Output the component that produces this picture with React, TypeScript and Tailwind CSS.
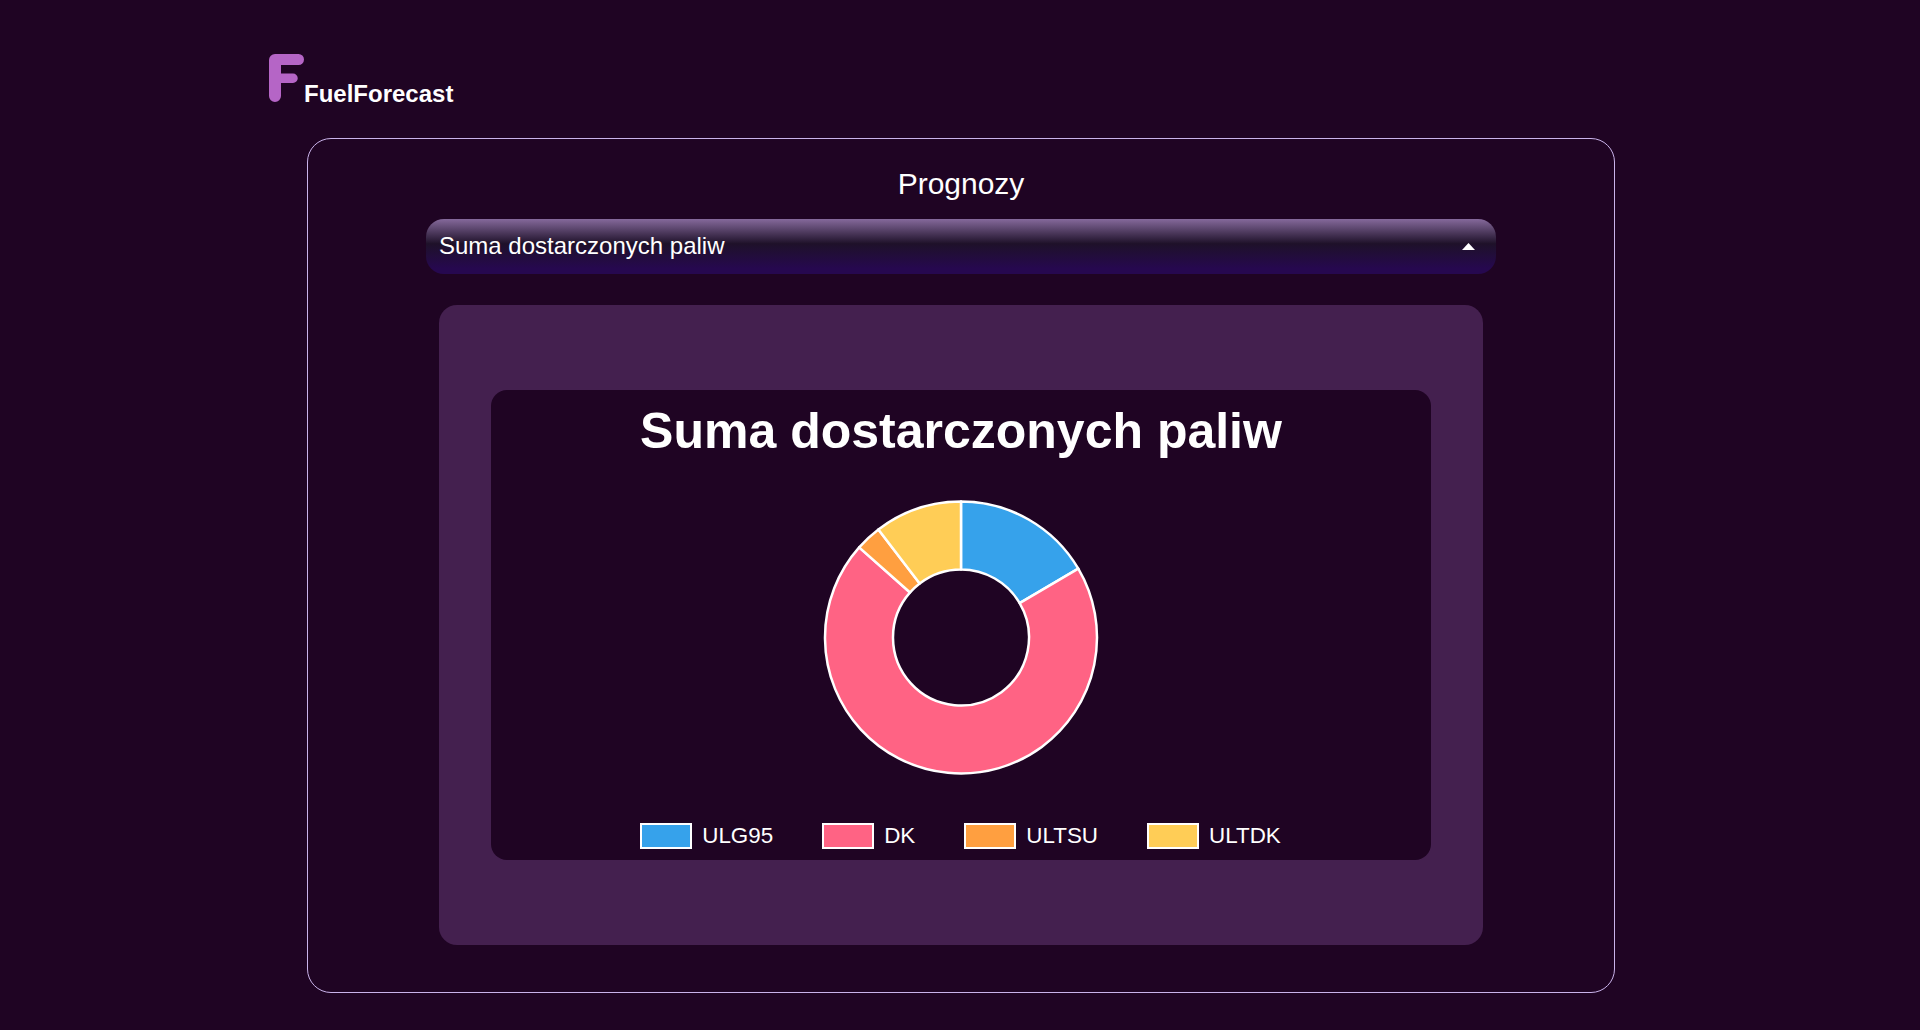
import React from "react";

const cx = 140, cy = 140.5, R = 136, r = 68;
function pt(rad: number, deg: number) {
  const a = (deg * Math.PI) / 180;
  return `${(cx + rad * Math.sin(a)).toFixed(2)} ${(cy - rad * Math.cos(a)).toFixed(2)}`;
}
function slice(a0: number, a1: number) {
  const large = a1 - a0 > 180 ? 1 : 0;
  return `M${pt(R, a0)}A${R} ${R} 0 ${large} 1 ${pt(R, a1)}L${pt(r, a1)}A${r} ${r} 0 ${large} 0 ${pt(r, a0)}Z`;
}
const slices = [
  { c: "#36a2eb", a: 0, b: 59.6 },
  { c: "#ff6384", a: 59.6, b: 311.5 },
  { c: "#ff9f40", a: 311.5, b: 322.6 },
  { c: "#ffcd56", a: 322.6, b: 360 },
];
const legend = [
  { label: "ULG95", box: "bg-[#36a2eb]" },
  { label: "DK", box: "bg-[#ff6384]" },
  { label: "ULTSU", box: "bg-[#ff9f40]" },
  { label: "ULTDK", box: "bg-[#ffcd56]" },
];

export default function App() {
  return (
    <div className="h-[1030px] overflow-hidden bg-[#1f0423] text-white font-['Liberation_Sans',Arial,sans-serif]">
      <header className="flex h-[138px] items-start pl-[269px] pt-[54px]">
        <svg width="35" height="48" viewBox="0 0 35 48" className="shrink-0">
          <path
            d="M6 0H29.5a5.5 5.5 0 0 1 0 11H12V19.5H24a4.5 4.5 0 0 1 0 9.5H12V42a6 6 0 0 1-12 0V6a6 6 0 0 1 6-6Z"
            fill="#b565c6"
          />
        </svg>
        <span className="mt-[26px] text-[24px] font-bold leading-[27px]">FuelForecast</span>
      </header>
      <main className="ml-[307px] flex h-[855px] w-[1308px] flex-col items-center rounded-[24px] border border-[#c9b3ea]">
        <h1 className="mt-[27px] text-[30px] font-normal leading-[36px]">Prognozy</h1>
        <button className="mt-[17px] flex h-[55px] w-[1070px] items-center justify-between rounded-[18px] bg-[linear-gradient(180deg,#85699b_0%,#1e1129_45%,#26084f_90%)] pl-[13px] pr-[21px] text-[24px] leading-[28px] text-white">
          <span className="mb-[2px]">Suma dostarczonych paliw</span>
          <svg width="13" height="7" viewBox="0 0 13 7"><path d="M0 7L6.5 0L13 7Z" fill="#fff" /></svg>
        </button>
        <section className="mt-[31px] flex h-[640px] w-[1044px] items-center justify-center rounded-[18px] bg-[#44204f]">
          <div className="flex h-[470px] w-[940px] flex-col items-center rounded-[16px] bg-[#1f0423]">
            <h2 className="mt-[11px] text-[50px] font-bold leading-[60px]">Suma dostarczonych paliw</h2>
            <svg width="280" height="280" viewBox="0 0 280 280" className="mt-[36px]">
              {slices.map((s) => (
                <path key={s.c} d={slice(s.a, s.b)} fill={s.c} stroke="#fff" strokeWidth="2.5" strokeLinejoin="round" />
              ))}
            </svg>
            <div className="mt-[46px] flex items-center gap-[49px] pr-[1px]">
              {legend.map((l) => (
                <div key={l.label} className="flex items-center gap-[10px]">
                  <span className={`h-[26px] w-[52px] border-2 border-white ${l.box}`} />
                  <span className="text-[22.4px] leading-[26px]">{l.label}</span>
                </div>
              ))}
            </div>
          </div>
        </section>
      </main>
    </div>
  );
}
